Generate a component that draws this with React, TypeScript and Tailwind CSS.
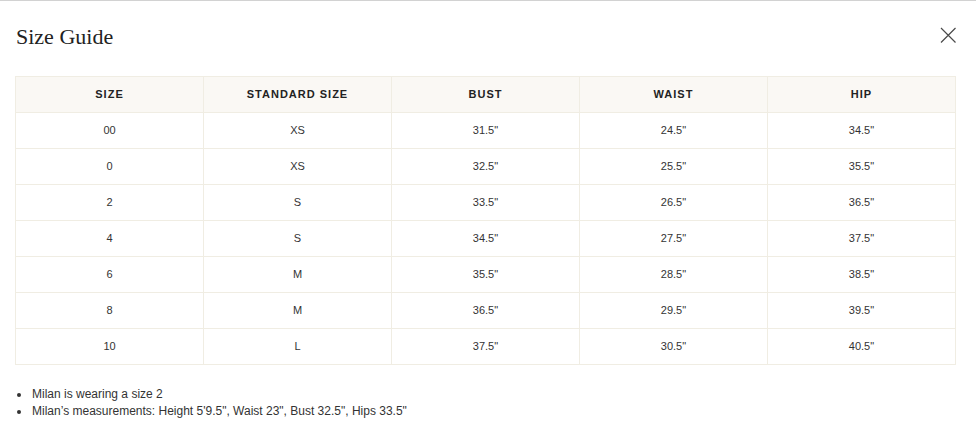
import React from "react";

const rows = [
  ["00", "XS", '31.5"', '24.5"', '34.5"'],
  ["0", "XS", '32.5"', '25.5"', '35.5"'],
  ["2", "S", '33.5"', '26.5"', '36.5"'],
  ["4", "S", '34.5"', '27.5"', '37.5"'],
  ["6", "M", '35.5"', '28.5"', '38.5"'],
  ["8", "M", '36.5"', '29.5"', '39.5"'],
  ["10", "L", '37.5"', '30.5"', '40.5"'],
];

const headers = ["SIZE", "STANDARD SIZE", "BUST", "WAIST", "HIP"];

const notes = [
  "Milan is wearing a size 2",
  'Milan’s measurements: Height 5\'9.5", Waist 23", Bust 32.5", Hips 33.5"',
];

export default function App() {
  return (
    <div className="w-[976px] h-[448px] bg-white overflow-hidden border-t border-[#d2d2d2]" style={{ fontFamily: '"Liberation Sans", Arial, sans-serif' }}>
      <div className="flex items-start justify-between pl-[16px] pr-[20px] pt-[22px]">
        <h1 className="text-[22px] leading-[28px] text-[#222]" style={{ fontFamily: '"Liberation Serif", "Times New Roman", serif' }}>
          Size Guide
        </h1>
        <button className="mt-[4px] w-[16px] h-[16px] flex items-center justify-center" aria-label="Close">
          <svg width="16" height="16" viewBox="0 0 16 16" fill="none">
            <path d="M1 1 L15.5 15.5 M15.5 1 L1 15.5" stroke="#4a4a4a" strokeWidth="1.2" />
          </svg>
        </button>
      </div>
      <div className="pl-[15px] mt-[25px]">
        <table className="w-[941px] border-collapse table-fixed text-[11px] text-[#333]">
          <thead>
            <tr className="bg-[#faf8f4]">
              {headers.map((h) => (
                <th key={h} className="h-[36px] border border-[#f0ede3] font-semibold tracking-[1px] text-[#222] text-center">
                  {h}
                </th>
              ))}
            </tr>
          </thead>
          <tbody>
            {rows.map((r, i) => (
              <tr key={i}>
                {r.map((c, j) => (
                  <td key={j} className="h-[36px] border border-[#f0ede3] text-center">
                    {c}
                  </td>
                ))}
              </tr>
            ))}
          </tbody>
        </table>
      </div>
      <ul className="mt-[21px] pl-[16px] text-[12px] leading-[17px] text-[#333]">
        {notes.map((n) => (
          <li key={n} className="flex items-center">
            <span className="w-[4px] h-[4px] rounded-full bg-[#333] ml-[1px] mr-[11px]" />
            <span>{n}</span>
          </li>
        ))}
      </ul>
    </div>
  );
}
